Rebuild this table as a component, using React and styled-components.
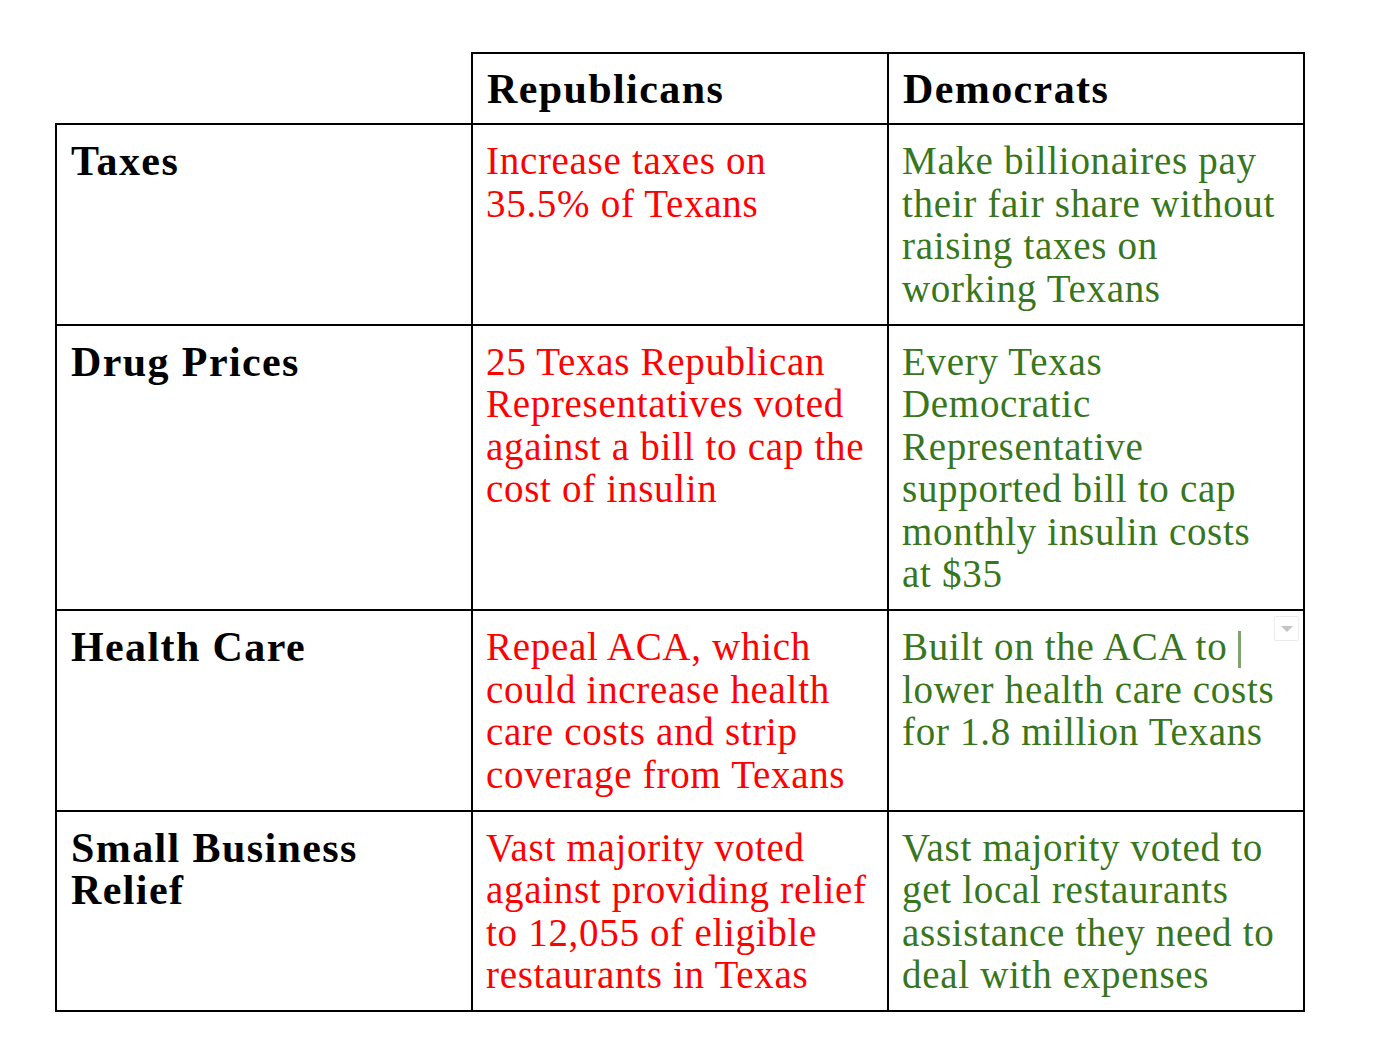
import React from "react";
import styled, { createGlobalStyle } from "styled-components";

const GlobalStyle = createGlobalStyle`
	html, body {
		margin: 0;
		padding: 0;
		background: #fff;
	}
	body {
		font-family: "Liberation Serif", "Times New Roman", serif;
	}
`;

const Page = styled.div`
	width: 1388px;
	min-height: 1038px;
	padding-top: 52px;
	box-sizing: border-box;
`;

const Table = styled.table`
	margin-left: 55px;
	width: 1250px;
	table-layout: fixed;
	border-collapse: collapse;
`;

const Cell = styled.td`
	position: relative;
	border: 2px solid #000;
	padding: 15px 14px 13.5px 13px;
	vertical-align: top;
	font-size: 39px;
	line-height: 42.5px;
	letter-spacing: 0.7px;
	color: ${(p) => (p.$tone === "red" ? "#ff0000" : p.$tone === "green" ? "#38761d" : "#000")};
	&.blank {
		border: none;
	}
`;

const Label = styled(Cell).attrs({ as: "th" })`
	text-align: left;
	font-weight: 700;
	font-size: 42px;
	letter-spacing: 1.4px;
	padding-left: 14px;
`;

const HeadLabel = styled(Label)`
	padding-top: 14px;
	padding-bottom: 12.5px;
`;

const Caret = styled.span`
	display: inline-block;
	width: 3px;
	height: 37px;
	vertical-align: -8px;
	background: #7fa46e;
`;

const Menu = styled.span`
	position: absolute;
	top: 5px;
	right: 4px;
	width: 23px;
	height: 23px;
	border: 1px solid #ececec;
	border-radius: 2px;
	background: #fff;
	display: flex;
	align-items: center;
	justify-content: center;
	&::after {
		content: "";
		border-left: 6px solid transparent;
		border-right: 6px solid transparent;
		border-top: 6px solid #c4c4c4;
	}
`;

const rows = [
	{
		topic: "Taxes",
		rep: "Increase taxes on 35.5% of Texans",
		dem: "Make billionaires pay their fair share without raising taxes on working Texans",
	},
	{
		topic: "Drug Prices",
		rep: "25 Texas Republican Representatives voted against a bill to cap the cost of insulin",
		dem: "Every Texas Democratic Representative supported bill to cap monthly insulin costs at $35",
	},
	{
		topic: "Health Care",
		rep: "Repeal ACA, which could increase health care costs and strip coverage from Texans",
		dem: "Built on the ACA to",
		demRest: "lower health care costs for 1.8 million Texans",
		cursor: true,
	},
	{
		topic: "Small Business Relief",
		rep: "Vast majority voted against providing relief to 12,055 of eligible restaurants in Texas",
		dem: "Vast majority voted to get local restaurants assistance they need to deal with expenses",
	},
];

function App() {
	return (
		<>
			<GlobalStyle />
			<Page>
				<Table>
					<colgroup>
						<col />
						<col />
						<col />
					</colgroup>
					<thead>
						<tr>
							<Cell className="blank" />
							<HeadLabel>Republicans</HeadLabel>
							<HeadLabel>Democrats</HeadLabel>
						</tr>
					</thead>
					<tbody>
						{rows.map((r) => (
							<tr key={r.topic}>
								<Label scope="row">{r.topic}</Label>
								<Cell $tone="red">{r.rep}</Cell>
								<Cell $tone="green">
									{r.dem}
									{r.cursor && (
										<>
											{" "}
											<Caret />
											{" "}
											{r.demRest}
											<Menu />
										</>
									)}
								</Cell>
							</tr>
						))}
					</tbody>
				</Table>
			</Page>
		</>
	);
}

export default App;
